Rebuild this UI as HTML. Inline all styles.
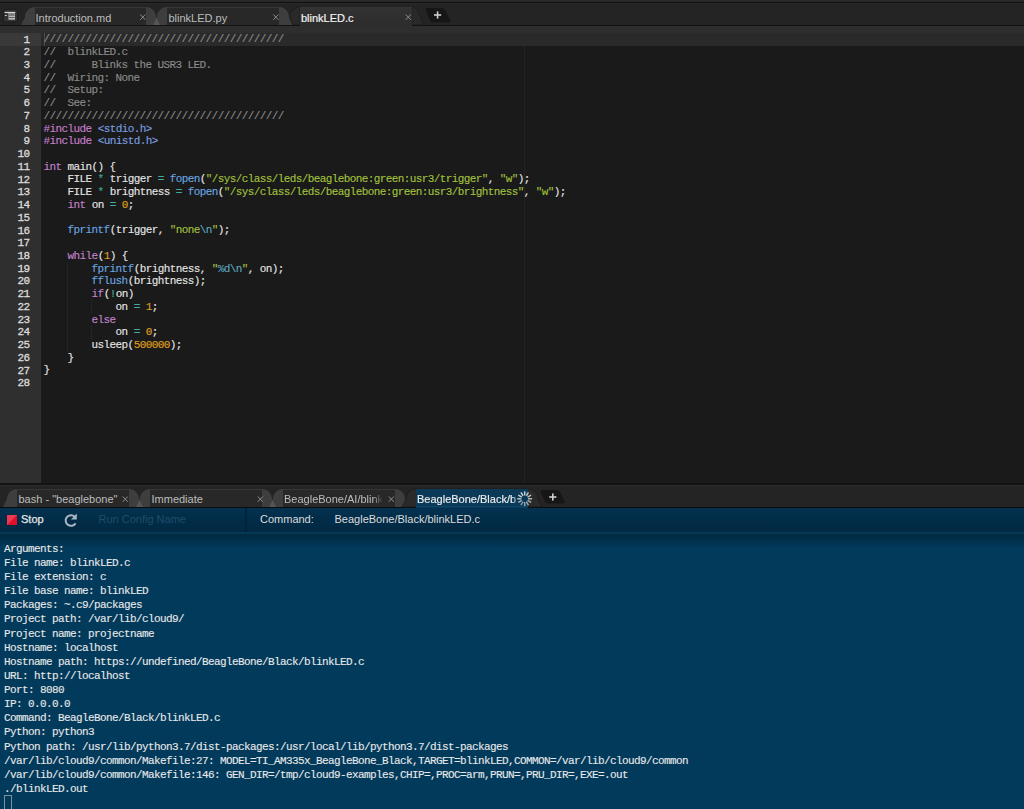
<!DOCTYPE html>
<html><head><meta charset="utf-8">
<style>
*{margin:0;padding:0;box-sizing:border-box}
html,body{width:1024px;height:809px;overflow:hidden;background:#1a1a1a}
body{position:relative;font-family:"Liberation Sans",sans-serif}
.a{position:absolute}
#topstrip{left:0;top:0;width:1024px;height:2px;background:#292929}
#topline{left:0;top:2px;width:1024px;height:1px;background:#0e0e0e}
#tabbar{left:0;top:3px;width:1024px;height:22px;background:#242424;border-top:1px solid #2b2b2b}
#tabline{left:0;top:25px;width:1024px;height:1px;background:#121212}
#strip{left:0;top:26px;width:1024px;height:7px;background:#2e2e2e}
#editor{left:0;top:33px;width:1024px;height:450px;background:#1a1a1a;overflow:hidden}
#gutter{left:0;top:0;width:41px;height:450px;background:#2f2f2f}
#actg{left:0;top:0;width:41px;height:12.73px;background:#393939}
#actc{left:41px;top:0;width:983px;height:12.73px;background:#2a2a2a}
#margin{left:524px;top:0;width:1px;height:450px;background:#232323}
.mono{-webkit-text-stroke:0.12px currentColor;font-family:"Liberation Mono",monospace;font-size:11px;letter-spacing:-0.6px;white-space:pre}
#nums{left:0;top:0.5px;width:29.4px;text-align:right;color:#dcdcdc;line-height:12.73px;-webkit-text-stroke:0.3px #dcdcdc}
#code{left:43.6px;top:0.4px;color:#e6e6e6;line-height:12.73px}
.cm{color:#8b8b8b}.kw{color:#c283cc}.inc{color:#c97fcf}.hdr{color:#7c9fe0}
.op{color:#3fae9e}.fn{color:#6aa6e2}.st{color:#a2c23e}.es{color:#5aa9c0}.nu{color:#e0a020}
#edbot{left:0;top:483px;width:1024px;height:2px;background:#131313}
#ptabbar{left:0;top:485px;width:1024px;height:22px;background:#242424;border-top:1px solid #2c2c2c}
#ptabline{left:0;top:507px;width:1024px;height:1px;background:#0c0c0c}
#toolbar{left:0;top:508px;width:1024px;height:24px;background:linear-gradient(#033250,#012b46 60%,#012a44)}
#tbline{left:0;top:532px;width:1024px;height:1.5px;background:#0a3551}
#term{left:0;top:533px;width:1024px;height:276px;background:#013a5b}
#termshadow{left:0;top:0.5px;width:1024px;height:14px;background:linear-gradient(#012840,rgba(1,58,91,0))}
#tout{left:4px;top:8.8px;color:#e8e8e8;line-height:14.12px}
.tab{height:18px;top:0}
.tt{font-size:11px;white-space:pre;color:#bdbdbd}
.cl{font-size:11px;color:#9a9a9a}
</style></head><body>
<div class="a" id="topstrip"></div>
<div class="a" id="topline"></div>
<div class="a" id="tabbar"></div>
<div class="a" id="tabline"></div>
<div class="a" id="strip"></div>

<!-- top tabs svg -->
<svg class="a" style="left:0;top:0" width="1024" height="26">
  <!-- menu button -->
  <rect x="3.5" y="9.3" width="14" height="12.8" rx="2.5" fill="#333" stroke="#1c1c1c" stroke-width="1"/>
  <rect x="4.6" y="11.9" width="10.6" height="1.2" fill="#d8d8d8"/>
  <rect x="4.9" y="15" width="1.8" height="1" fill="#cfcfcf"/>
  <rect x="8.5" y="13" width="6.5" height="6.7" fill="#bdbdbd"/>
  <rect x="9" y="13.3" width="5.6" height="2.6" fill="#777"/>
  <rect x="9" y="17" width="5.6" height="0.8" fill="#444"/>
  <!-- tab bodies -->
  <rect x="35" y="7" width="111" height="18" fill="#282828"/>
  <rect x="167" y="7" width="112" height="18" fill="#282828"/>
  <rect x="35" y="7" width="111" height="1" fill="#363636"/>
  <rect x="167" y="7" width="112" height="1" fill="#363636"/>
  <path d="M35,7 C29.5,7 25,11.5 25,17 L21,25 L35,25 Z" fill="#fff" fill-opacity="0.12"/>
  <path d="M146,7 C151.5,7 156,11.5 156,17 L160,25 L146,25 Z" fill="#fff" fill-opacity="0.12"/>
  <path d="M167,7 C161.5,7 157,11.5 157,17 L153,25 L167,25 Z" fill="#fff" fill-opacity="0.12"/>
  <path d="M279,7 C284.5,7 289,11.5 289,17 L293,25 L279,25 Z" fill="#fff" fill-opacity="0.12"/>
  <!-- active tab -->
  <defs><linearGradient id="actg" x1="0" y1="0" x2="0" y2="1"><stop offset="0" stop-color="#333"/><stop offset="1" stop-color="#2c2c2c"/></linearGradient></defs>
  <path d="M300,7 C295,7 290,11 290,16.5 C290,20 291.5,23 293.3,25 L300,25 Z" fill="#292929" stroke="#1b1b1b" stroke-width="0.7"/>
  <path d="M412,7 C416,7 418,11 420,16 L423.5,25 L412,25 Z" fill="#292929" stroke="#1b1b1b" stroke-width="0.7"/>
  <rect x="300" y="7" width="112" height="19" fill="url(#actg)"/>
  <!-- plus -->
  <path d="M425.5,10 Q425,8 427,8 L442,8 Q444,8 445,10 L450.5,20.5 Q451,22.5 449,22.5 L433,22.5 Q431,22.5 430,20.5 Z" fill="#161616"/>
  <rect x="434" y="14.2" width="7.2" height="1.6" fill="#cfcfcf"/>
  <rect x="436.8" y="11.4" width="1.6" height="7.2" fill="#cfcfcf"/>
  <!-- close x -->
  <g stroke="#8e8e8e" stroke-width="1">
    <path d="M140.3,14.5 L145.3,19.8 M145.3,14.5 L140.3,19.8"/>
    <path d="M273.3,14.5 L278.3,19.8 M278.3,14.5 L273.3,19.8"/>
    <path d="M405.8,14.5 L410.8,19.8 M410.8,14.5 L405.8,19.8"/>
  </g>
</svg>
<div class="a tt" style="left:35.5px;top:11.7px;line-height:13px">Introduction.md</div>
<div class="a tt" style="left:168.5px;top:11.7px;line-height:13px">blinkLED.py</div>
<div class="a tt" style="left:301px;top:11.7px;line-height:13px;color:#f2f2f2;-webkit-text-stroke:0.2px #f2f2f2">blinkLED.c</div>

<div class="a" id="editor">
  <div class="a" id="gutter"></div>
  <div class="a" id="margin"></div>
  <div class="a" id="actg"></div>
  <div class="a" id="actc"></div>
  <div class="a" style="left:44px;top:0;width:1px;height:12.73px;background:#4d4d4d"></div>
  <div class="a" style="left:67px;top:229.1px;width:0;height:89px;border-left:1px dotted #2e2e2e"></div>
  <div class="a" style="left:91px;top:267.3px;width:0;height:12.73px;border-left:1px dotted #2e2e2e"></div>
  <div class="a" style="left:91px;top:292.8px;width:0;height:12.73px;border-left:1px dotted #2e2e2e"></div>
  <div class="a mono" id="nums">1
2
3
4
5
6
7
8
9
10
11
12
13
14
15
16
17
18
19
20
21
22
23
24
25
26
27
28</div>
  <div class="a mono" id="code"><span class="cm">////////////////////////////////////////</span>
<span class="cm">//  blinkLED.c</span>
<span class="cm">//      Blinks the USR3 LED.</span>
<span class="cm">//  Wiring: None</span>
<span class="cm">//  Setup:</span>
<span class="cm">//  See:</span>
<span class="cm">////////////////////////////////////////</span>
<span class="inc">#include</span> <span class="hdr">&lt;stdio.h&gt;</span>
<span class="inc">#include</span> <span class="hdr">&lt;unistd.h&gt;</span>

<span class="kw">int</span> main() {
    FILE <span class="op">*</span> trigger <span class="op">=</span> <span class="fn">fopen</span>(<span class="st">"/sys/class/leds/beaglebone:green:usr3/trigger"</span>, <span class="st">"w"</span>);
    FILE <span class="op">*</span> brightness <span class="op">=</span> <span class="fn">fopen</span>(<span class="st">"/sys/class/leds/beaglebone:green:usr3/brightness"</span>, <span class="st">"w"</span>);
    <span class="kw">int</span> on <span class="op">=</span> <span class="nu">0</span>;

    <span class="fn">fprintf</span>(trigger, <span class="st">"none</span><span class="es">\n</span><span class="st">"</span>);

    <span class="kw">while</span>(<span class="nu">1</span>) {
        <span class="fn">fprintf</span>(brightness, <span class="st">"</span><span class="es">%d\n</span><span class="st">"</span>, on);
        <span class="fn">fflush</span>(brightness);
        <span class="kw">if</span>(<span class="op">!</span>on)
            on <span class="op">=</span> <span class="nu">1</span>;
        <span class="kw">else</span>
            on <span class="op">=</span> <span class="nu">0</span>;
        usleep(<span class="nu">500000</span>);
    }
}
</div>
</div>

<div class="a" id="edbot"></div>
<div class="a" id="ptabbar"></div>
<div class="a" id="ptabline"></div>
<div class="a" id="toolbar"></div>
<div class="a" id="tbline"></div>
<div class="a" id="term">
  <div class="a" id="termshadow"></div>
  <div class="a mono" id="tout">Arguments:
File name: blinkLED.c
File extension: c
File base name: blinkLED
Packages: ~.c9/packages
Project path: /var/lib/cloud9/
Project name: projectname
Hostname: localhost
Hostname path: https://undefined/BeagleBone/Black/blinkLED.c
URL: http://localhost
Port: 8080
IP: 0.0.0.0
Command: BeagleBone/Black/blinkLED.c
Python: python3
Python path: /usr/lib/python3.7/dist-packages:/usr/local/lib/python3.7/dist-packages
/var/lib/cloud9/common/Makefile:27: MODEL=TI_AM335x_BeagleBone_Black,TARGET=blinkLED,COMMON=/var/lib/cloud9/common
/var/lib/cloud9/common/Makefile:146: GEN_DIR=/tmp/cloud9-examples,CHIP=,PROC=arm,PRUN=,PRU_DIR=,EXE=.out
./blinkLED.out</div>
</div>
<div class="a" style="left:4px;top:795px;width:8px;height:16px;border:1px solid #7d8f9b"></div>

<!-- panel tabs svg -->
<svg class="a" style="left:0;top:482px" width="1024" height="27">
  <rect x="17" y="7" width="112" height="18" fill="#282828"/>
  <rect x="150" y="7" width="112" height="18" fill="#282828"/>
  <rect x="283" y="7" width="112" height="18" fill="#282828"/>
  <rect x="17" y="7" width="112" height="1" fill="#363636"/>
  <rect x="150" y="7" width="112" height="1" fill="#363636"/>
  <rect x="283" y="7" width="112" height="1" fill="#363636"/>
  <path d="M17,7 C11.5,7 7,11.5 7,17 L3,25 L17,25 Z" fill="#fff" fill-opacity="0.12"/>
  <path d="M129,7 C134.5,7 139,11.5 139,17 L143,25 L129,25 Z" fill="#fff" fill-opacity="0.12"/>
  <path d="M150,7 C144.5,7 140,11.5 140,17 L136,25 L150,25 Z" fill="#fff" fill-opacity="0.12"/>
  <path d="M262,7 C267.5,7 272,11.5 272,17 L276,25 L262,25 Z" fill="#fff" fill-opacity="0.12"/>
  <path d="M283,7 C277.5,7 273,11.5 273,17 L269,25 L283,25 Z" fill="#fff" fill-opacity="0.12"/>
  <path d="M395,7 C400.5,7 405,11.5 405,17 L409,25 L395,25 Z" fill="#fff" fill-opacity="0.12"/>
  <path d="M416,7 C410.5,7 406,11.5 406,17 L402,25 L542,25 L538,17 C538,11.5 533.5,7 528,7 Z" fill="#2a2a2a" stroke="#181818" stroke-width="0.6"/>
  <rect x="416" y="7" width="112" height="19" fill="#0b3a58"/>
  <rect x="416" y="24" width="112" height="1" fill="#0f4566"/>
  <!-- plus -->
  <path d="M540.5,10 Q540,8 542,8 L557,8 Q559,8 560,10 L564.5,19.5 Q565,21.5 563,21.5 L548,21.5 Q546,21.5 545,19.5 Z" fill="#161616"/>
  <rect x="549.2" y="14.2" width="7.2" height="1.6" fill="#cfcfcf"/>
  <rect x="552" y="11.4" width="1.6" height="7.2" fill="#cfcfcf"/>
  <g stroke="#8e8e8e" stroke-width="1">
    <path d="M122.8,14.5 L127.8,19.8 M127.8,14.5 L122.8,19.8"/>
    <path d="M257.8,14.5 L262.8,19.8 M262.8,14.5 L257.8,19.8"/>
    <path d="M388.8,14.5 L393.8,19.8 M393.8,14.5 L388.8,19.8"/>
  </g>
  <!-- spinner -->
  <g transform="translate(524.7,16.75)" stroke="#c8d0d5" stroke-width="1.5" stroke-linecap="butt">
  <path d="M0.00,-3.30 L0.00,-7.40" stroke-opacity="1"/>
  <path d="M1.65,-2.86 L3.70,-6.41" stroke-opacity="0.95"/>
  <path d="M2.86,-1.65 L6.41,-3.70" stroke-opacity="0.9"/>
  <path d="M3.30,-0.00 L7.40,-0.00" stroke-opacity="0.85"/>
  <path d="M2.86,1.65 L6.41,3.70" stroke-opacity="0.8"/>
  <path d="M1.65,2.86 L3.70,6.41" stroke-opacity="0.75"/>
  <path d="M0.00,3.30 L0.00,7.40" stroke-opacity="0.7"/>
  <path d="M-1.65,2.86 L-3.70,6.41" stroke-opacity="0.65"/>
  <path d="M-2.86,1.65 L-6.41,3.70" stroke-opacity="0.8"/>
  <path d="M-3.30,0.00 L-7.40,0.00" stroke-opacity="0.9"/>
  <path d="M-2.86,-1.65 L-6.41,-3.70" stroke-opacity="1"/>
  <path d="M-1.65,-2.86 L-3.70,-6.41" stroke-opacity="1"/>
  </g>
</svg>
<div class="a tt" style="left:18.5px;top:493px;line-height:13px">bash - "beaglebone"</div>
<div class="a tt" style="left:151.5px;top:493px;line-height:13px">Immediate</div>
<div class="a tt" style="left:284px;top:493px;line-height:13px;width:99px;overflow:hidden;-webkit-mask-image:linear-gradient(90deg,#000 90%,transparent 100%)">BeagleBone/AI/blinkLED.c</div>
<div class="a tt" style="left:417px;top:493px;line-height:13px;color:#eeeeee;-webkit-text-stroke:0.15px #eee;width:99px;overflow:hidden;-webkit-mask-image:linear-gradient(90deg,#000 96%,rgba(0,0,0,0.5) 100%)">BeagleBone/Black/blinkLED.c</div>

<!-- toolbar -->
<div class="a" style="left:7px;top:515px;width:10px;height:10px;background:linear-gradient(135deg,#ec3a52 0%,#ec3a52 45%,#e0102a 55%,#e0102a 100%)"></div>
<div class="a tt" style="left:21px;top:513px;line-height:13px;color:#e6e6e6;-webkit-text-stroke:0.25px #e6e6e6">Stop</div>
<svg class="a" style="left:60px;top:511px" width="20" height="20">
  <path d="M15.6,12.15 A5.3,5.3 0 1 1 14.6,5.6" fill="none" stroke="#aab6bf" stroke-width="2"/>
  <path d="M16.8,2.5 L16.8,8.6 L11,8.6 Z" fill="#aab6bf"/>
</svg>
<div class="a tt" style="left:98.5px;top:513px;line-height:13px;color:#204c69">Run Config Name</div>
<div class="a" style="left:245.3px;top:508px;width:1.6px;height:24px;background:#01243b"></div>
<div class="a tt" style="left:260px;top:513px;line-height:13px;color:#dcdcdc">Command:</div>
<div class="a tt" style="left:334.5px;top:513px;line-height:13px;color:#dcdcdc">BeagleBone/Black/blinkLED.c</div>
</body></html>
